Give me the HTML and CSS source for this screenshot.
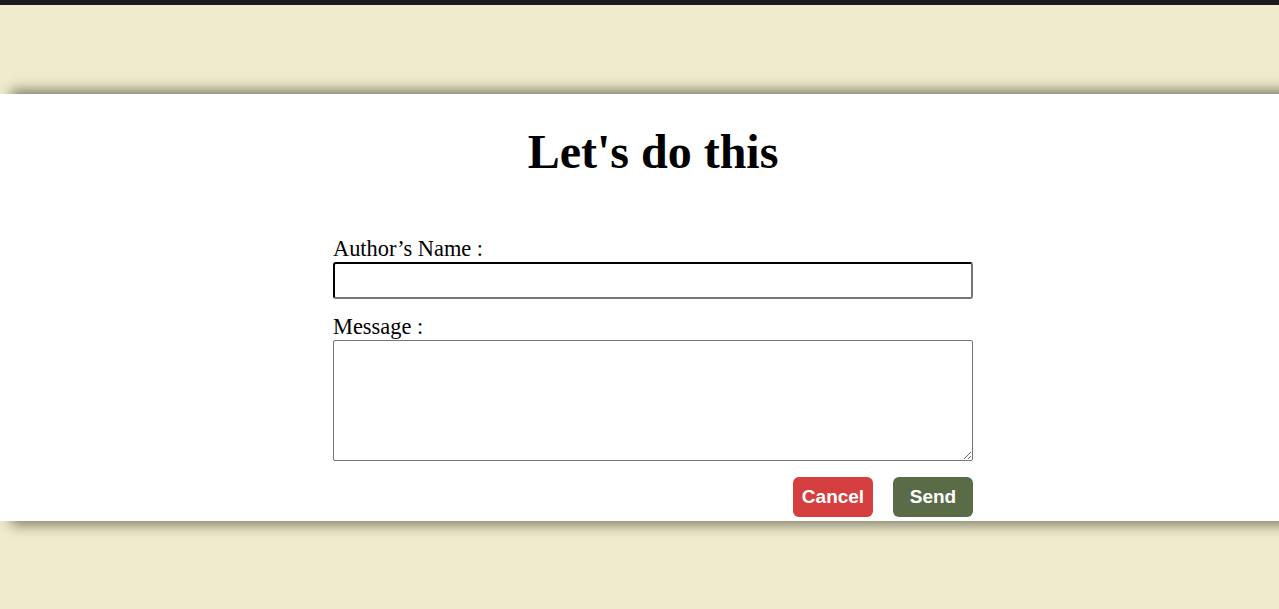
FILE: index.html
```html
<!DOCTYPE html>
<html>
<head>
<meta charset="utf-8">
<link rel="stylesheet" href="styles.css">
</head>
<body>
<div class="topbar"></div>
<main class="page">
  <section class="panel">
    <h1 class="title">Let's do this</h1>
    <form class="form">
      <label class="label" for="author">Author’s Name :</label>
      <input class="input" id="author" type="text">
      <label class="label label-msg" for="msg">Message :</label>
      <textarea class="textarea" id="msg"></textarea>
      <div class="actions">
        <button type="button" class="btn btn-cancel">Cancel</button>
        <button type="button" class="btn btn-send">Send</button>
      </div>
    </form>
  </section>
</main>
</body>
</html>
```

FILE: styles.css
```css
html, body {
  margin: 0;
  padding: 0;
}
body {
  background: #f0ebcd;
  height: 609px;
  overflow: hidden;
  font-family: "Liberation Serif", "Times New Roman", serif;
}
.topbar {
  height: 5px;
  background: #1b1a1f;
}
.page {
  padding-top: 89px;
}
.panel {
  background: #fff;
  height: 427px;
  box-shadow: 15px 0 12px 4px rgba(55, 52, 35, 0.6);
  display: flex;
  flex-direction: column;
  align-items: center;
  padding-left: 27px;
  box-sizing: border-box;
}
.title {
  margin: 0;
  padding-top: 30px;
  font-size: 48px;
  font-weight: bold;
  line-height: 55px;
  color: #000;
}
.form {
  width: 640px;
  margin-top: 57px;
  display: flex;
  flex-direction: column;
}
.label {
  font-size: 22.4px;
  line-height: 26px;
  color: #000;
}
.label-msg {
  margin-top: 15px;
}
.input {
  box-sizing: border-box;
  height: 37px;
  width: 640px;
  margin: 0;
  border: 2px inset #767676;
  border-top-color: #222;
  border-left-color: #222;
  border-radius: 3px;
  background: #fff;
  font-size: 16px;
}
.textarea {
  box-sizing: border-box;
  width: 640px;
  height: 121px;
  margin: 0;
  border: 1px solid #767676;
  border-radius: 2px;
  background: #fff;
}
.actions {
  display: flex;
  justify-content: flex-end;
  gap: 20px;
  margin-top: 16px;
}
.btn {
  width: 80px;
  height: 40px;
  border: none;
  border-radius: 6px;
  color: #fff;
  font-family: "Liberation Sans", Arial, sans-serif;
  font-weight: bold;
  font-size: 19px;
  padding: 0;
}
.btn-cancel {
  background: #d63f3f;
}
.btn-send {
  background: #5a6b48;
}
```
